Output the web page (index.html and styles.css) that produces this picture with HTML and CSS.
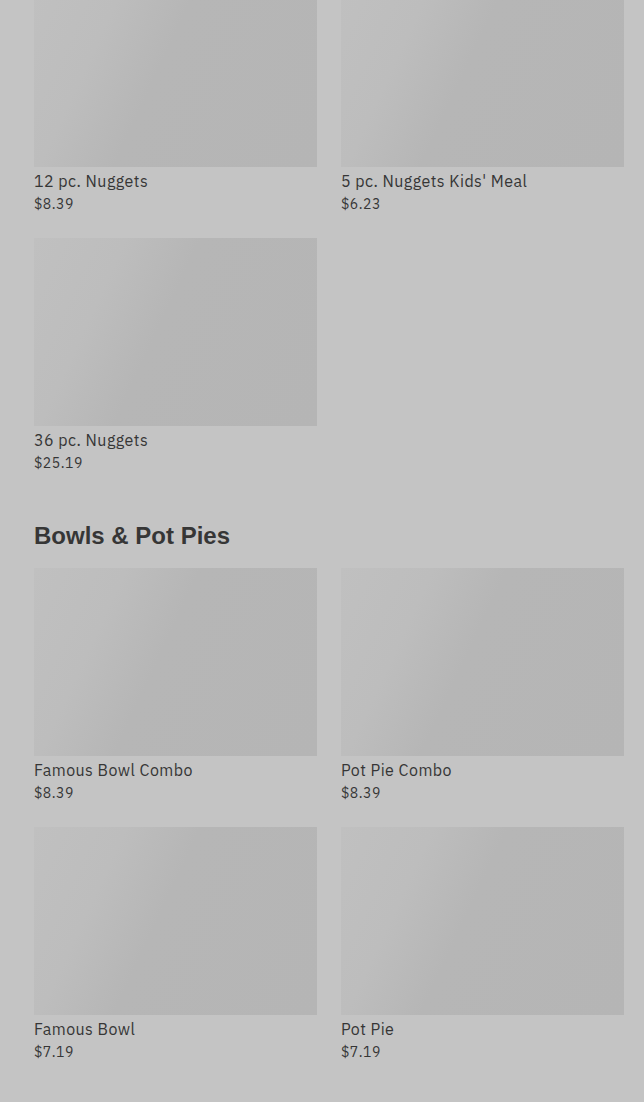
FILE: index.html
```html
<!DOCTYPE html>
<html>
<head>
<meta charset="utf-8">
<link rel="stylesheet" href="styles.css">
</head>
<body>
<main class="page">
  <section class="section">
    <div class="grid">
      <div class="card"><div class="thumb"></div><div class="name">12 pc. Nuggets</div><div class="price">$8.39</div></div>
      <div class="card"><div class="thumb"></div><div class="name">5 pc. Nuggets Kids' Meal</div><div class="price">$6.23</div></div>
      <div class="card"><div class="thumb"></div><div class="name">36 pc. Nuggets</div><div class="price">$25.19</div></div>
    </div>
  </section>
  <section class="section">
    <h2 class="heading">Bowls &amp; Pot Pies</h2>
    <div class="grid">
      <div class="card"><div class="thumb"></div><div class="name">Famous Bowl Combo</div><div class="price">$8.39</div></div>
      <div class="card"><div class="thumb"></div><div class="name">Pot Pie Combo</div><div class="price">$8.39</div></div>
      <div class="card"><div class="thumb"></div><div class="name">Famous Bowl</div><div class="price">$7.19</div></div>
      <div class="card"><div class="thumb"></div><div class="name">Pot Pie</div><div class="price">$7.19</div></div>
    </div>
  </section>
</main>
</body>
</html>
```
FILE: styles.css
```css
html, body {
  margin: 0;
  padding: 0;
  background: #c4c4c4;
  overflow: hidden;
}
.page {
  margin-top: -21px;
  padding: 0 20px 0 34px;
  font-family: "IBM Plex Sans", "Open Sans", "Noto Sans", sans-serif;
  color: #363636;
}
.section {
  padding-bottom: 46px;
}
.grid {
  display: grid;
  grid-template-columns: 1fr 1fr;
  column-gap: 24px;
  row-gap: 23px;
}
.card {
  display: flex;
  flex-direction: column;
}
.thumb {
  height: 188px;
  background: linear-gradient(115deg, #c0c0c0 0%, #bdbdbd 25%, #b6b6b6 45%, #b5b5b5 100%);
}
.name {
  font-size: 16px;
  line-height: 24px;
  margin-top: 2px;
  letter-spacing: 0.45px;
}
.price {
  font-size: 14px;
  line-height: 22px;
  letter-spacing: 0.5px;
}
.heading {
  font-family: "Liberation Sans", Arial, sans-serif;
  font-weight: bold;
  font-size: 24px;
  line-height: 32px;
  margin: 0 0 16px 0;
  color: #363636;
}
```
